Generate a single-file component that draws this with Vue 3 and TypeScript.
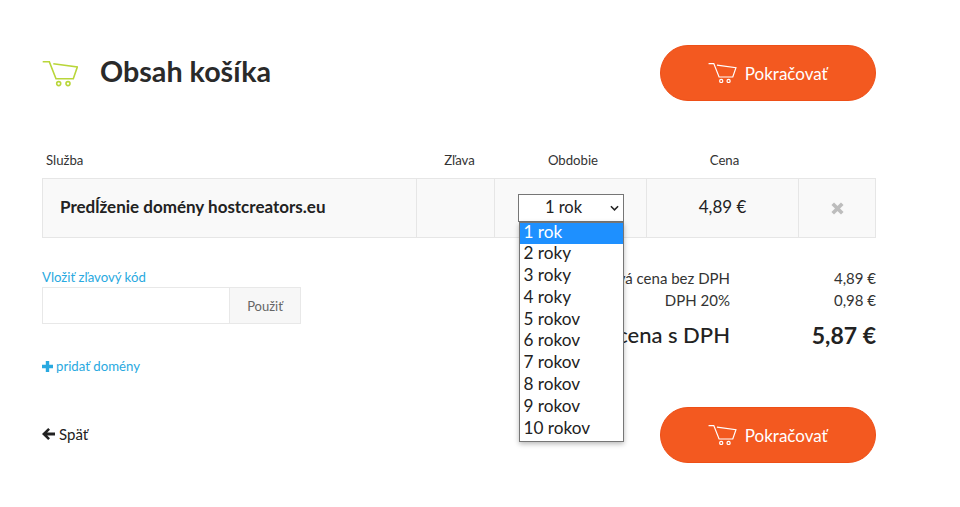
<script setup lang="ts">
const options: string[] = ['1 rok', '2 roky', '3 roky', '4 roky', '5 rokov', '6 rokov', '7 rokov', '8 rokov', '9 rokov', '10 rokov']
const cartPath = 'M0.7 0.7 H7.3 L14 17.7 H31.3 L35.3 6 L11.3 2.7'
</script>

<template>
  <div class="page">
    <header class="head">
      <div class="title-wrap">
        <svg class="cart-big" viewBox="0 0 36 26" fill="none" stroke="#b9d63a" stroke-width="1.6">
          <path :d="cartPath" />
          <circle cx="16.7" cy="22.6" r="2" />
          <circle cx="26" cy="22.6" r="2" />
        </svg>
        <h1>Obsah košíka</h1>
      </div>
      <a class="cta">
        <svg class="cart-small" viewBox="0 0 36 26" fill="none" stroke="#fff" stroke-width="1.5">
          <path :d="cartPath" />
          <circle cx="16.7" cy="22.6" r="2" />
          <circle cx="26" cy="22.6" r="2" />
        </svg>
        Pokračovať
      </a>
    </header>

    <div class="grid labels">
      <div class="l-service">Služba</div>
      <div class="l-discount">Zľava</div>
      <div class="l-period">Obdobie</div>
      <div class="l-price">Cena</div>
      <div></div>
    </div>

    <div class="grid row">
      <div class="c c-name">Predĺženie domény hostcreators.eu</div>
      <div class="c"></div>
      <div class="c">
        <div class="select">
          <span class="sel-text">1 rok</span>
          <svg class="chev" viewBox="0 0 10 6" fill="none" stroke="#222" stroke-width="1.7"><path d="M1 1 L5 5 L9 1" /></svg>
          <ul class="menu">
            <li v-for="(o, i) in options" :key="o" :class="{ on: i === 0 }">{{ o }}</li>
          </ul>
        </div>
      </div>
      <div class="c c-price">4,89 €</div>
      <div class="c">
        <svg class="x" viewBox="0 0 12 12" fill="none" stroke="#bdbdbd" stroke-width="3.4"><path d="M1.6 1.6 L10.4 10.4 M10.4 1.6 L1.6 10.4" /></svg>
      </div>
    </div>

    <div class="lower">
      <div class="left">
        <a class="link label-code">Vložiť zľavový kód</a>
        <div class="coupon">
          <div class="field"></div>
          <div class="apply">Použiť</div>
        </div>
        <a class="link add">
          <svg class="plus" viewBox="0 0 11 11" fill="#29a9e0"><path d="M3.8 0 H7.2 V3.8 H11 V7.2 H7.2 V11 H3.8 V7.2 H0 V3.8 H3.8 Z" /></svg>
          pridať domény
        </a>
      </div>
      <div class="sum">
        <div class="sum-row"><span class="k">Celková cena bez DPH</span><span class="v">4,89 €</span></div>
        <div class="sum-row"><span class="k">DPH 20%</span><span class="v">0,98 €</span></div>
        <div class="sum-row total"><span class="k">Celková cena s DPH</span><span class="v">5,87 €</span></div>
      </div>
    </div>

    <footer class="foot">
      <a class="back">
        <svg class="arrow" viewBox="0 0 13 12" fill="#222"><path d="M6.2 0 L8 1.8 L5.2 4.4 H13 V7.6 H5.2 L8 10.2 L6.2 12 L0 6 Z" /></svg>
        Späť
      </a>
      <a class="cta">
        <svg class="cart-small" viewBox="0 0 36 26" fill="none" stroke="#fff" stroke-width="1.5">
          <path :d="cartPath" />
          <circle cx="16.7" cy="22.6" r="2" />
          <circle cx="26" cy="22.6" r="2" />
        </svg>
        Pokračovať
      </a>
    </footer>
  </div>
</template>

<style>
html, body { margin: 0; background: #fff; }
</style>

<style scoped>
.page {
  box-sizing: border-box;
  width: 960px;
  height: 507px;
  padding: 45px 84px 0 42px;
  overflow: hidden;
  font-family: Lato, "Liberation Sans", sans-serif;
  color: #222;
}
.head, .foot {
  display: flex;
  justify-content: space-between;
  align-items: center;
}
.title-wrap { display: flex; align-items: center; gap: 22px; }
.cart-big { width: 36px; height: 26px; display: block; margin-top: 2px; }
h1 {
  margin: 0 0 4px;
  font-size: 28.7px;
  line-height: 48px;
  font-weight: 700;
  color: #2a2a2a;
}
.cta {
  box-sizing: border-box;
  width: 216px;
  height: 56px;
  display: flex;
  align-items: center;
  justify-content: center;
  gap: 8px;
  border-radius: 28px;
  background: #f35920;
  border: 1px solid #ee4f17;
  color: #fff;
  font-size: 17px;
}
.cart-small { width: 28.5px; height: 20.6px; display: block; }

.grid {
  display: grid;
  grid-template-columns: 374px 78px 152px 152px 78px;
}
.labels {
  margin-top: 50px;
  height: 27px;
  line-height: 18px;
  font-size: 13.2px;
  text-align: center;
  color: #333;
}
.l-service { text-align: left; padding-left: 4px; }
.l-discount { padding-left: 9px; }
.l-period { padding-left: 6px; }
.l-price { padding-left: 5px; }
.row {
  height: 60px;
  box-sizing: border-box;
  border: 1px solid #e6e6e6;
  background: #f9f9f9;
  grid-template-columns: 373px 78px 152px 152px 77px;
}
.c {
  display: flex;
  align-items: center;
  justify-content: center;
  font-size: 16.5px;
  border-left: 1px solid #e6e6e6;
}
.c-name {
  justify-content: flex-start;
  padding: 0 0 4px 17px;
  border-left: 0;
  font-size: 17px;
  font-weight: 700;
}
.c-price { font-size: 17px; padding-bottom: 4px; }
.select {
  position: relative;
  box-sizing: border-box;
  width: 106px;
  height: 28px;
  margin-top: -1px;
  background: #fff;
  border: 1px solid #767676;
  display: flex;
  align-items: center;
  justify-content: center;
  padding-right: 14px;
}
.sel-text { margin-top: -1px; }
.chev { position: absolute; right: 4px; top: 10px; width: 9px; height: 6px; }
.x { width: 13px; height: 13px; }
.menu {
  position: absolute;
  z-index: 2;
  left: 0;
  top: 27px;
  box-sizing: border-box;
  width: 105px;
  height: 220px;
  margin: 0;
  padding: 0;
  list-style: none;
  background: #fff;
  border: 1px solid #767676;
  box-shadow: 0 2px 5px rgba(0, 0, 0, 0.28);
  font-size: 17.2px;
}
.menu li { height: 21.8px; line-height: 18px; padding-left: 4px; }
.menu li.on { background: #1e90ff; color: #fff; }

.lower {
  display: flex;
  justify-content: space-between;
  margin-top: 30px;
  height: 139px;
}
.left { width: 259px; }
.link { display: block; color: #29a9e0; font-size: 13.2px; }
.label-code { line-height: 19px; }
.coupon {
  display: flex;
  box-sizing: border-box;
  height: 37px;
  border: 1px solid #e8e8e8;
}
.field { flex: 1; background: #fff; }
.apply {
  width: 70px;
  display: flex;
  align-items: center;
  justify-content: center;
  background: #f7f7f7;
  border-left: 1px solid #e8e8e8;
  color: #666;
  font-size: 13px;
}
.add {
  display: flex;
  align-items: center;
  gap: 3px;
  margin-top: 32px;
  line-height: 20px;
}
.plus { width: 11px; height: 11px; }
.sum { width: 390px; margin-top: -1px; }
.sum-row {
  display: flex;
  justify-content: flex-end;
  font-size: 15px;
  line-height: 22px;
  color: #333;
}
.k { text-align: right; }
.v { width: 146px; text-align: right; }
.total {
  margin-top: 9px;
  font-size: 22px;
  line-height: 30px;
  color: #222;
  font-weight: 500;
}
.total .v { font-weight: 700; font-size: 23px; }

.back {
  display: flex;
  align-items: center;
  gap: 4px;
  font-size: 15px;
  margin: 0 0 2px;
}
.arrow { width: 13px; height: 12px; }
</style>
